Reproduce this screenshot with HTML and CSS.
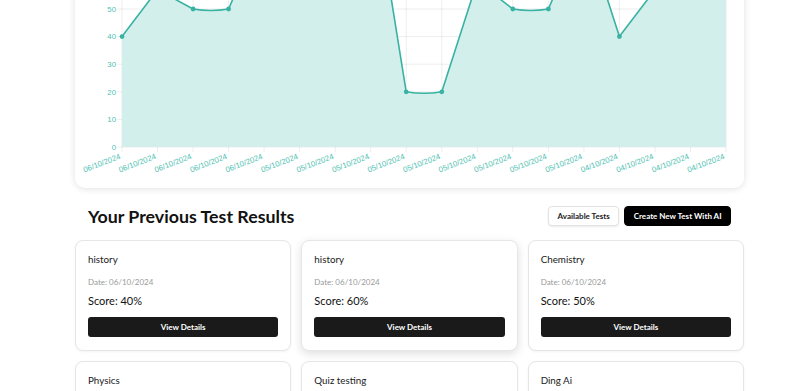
FILE: index.html
```html
<!DOCTYPE html>
<html lang="en">
<head>
<meta charset="utf-8">
<title>Test Results</title>
<link rel="stylesheet" href="styles.css">
</head>
<body>
<main class="page">
  <section class="chart-card">
    <svg class="chart" width="669" height="375" viewBox="75 -200 669 375" xmlns="http://www.w3.org/2000/svg">
      <g class="grid">
        <line x1="117" y1="147" x2="726" y2="147"/>
        <line x1="117" y1="119.4" x2="726" y2="119.4"/>
        <line x1="117" y1="91.8" x2="726" y2="91.8"/>
        <line x1="117" y1="64.2" x2="726" y2="64.2"/>
        <line x1="117" y1="36.6" x2="726" y2="36.6"/>
        <line x1="117" y1="9" x2="726" y2="9"/>
        <line x1="117" y1="-18.6" x2="726" y2="-18.6"/>
        <line x1="117" y1="-46.2" x2="726" y2="-46.2"/>
        <line x1="117" y1="-73.8" x2="726" y2="-73.8"/>
        <line x1="117" y1="-101.4" x2="726" y2="-101.4"/>
        <line x1="117" y1="-129" x2="726" y2="-129"/>
        <line x1="122" y1="-129" x2="122" y2="152"/>
        <line x1="157.5" y1="-129" x2="157.5" y2="152"/>
        <line x1="193.1" y1="-129" x2="193.1" y2="152"/>
        <line x1="228.6" y1="-129" x2="228.6" y2="152"/>
        <line x1="264.1" y1="-129" x2="264.1" y2="152"/>
        <line x1="299.6" y1="-129" x2="299.6" y2="152"/>
        <line x1="335.2" y1="-129" x2="335.2" y2="152"/>
        <line x1="370.7" y1="-129" x2="370.7" y2="152"/>
        <line x1="406.2" y1="-129" x2="406.2" y2="152"/>
        <line x1="441.8" y1="-129" x2="441.8" y2="152"/>
        <line x1="477.3" y1="-129" x2="477.3" y2="152"/>
        <line x1="512.8" y1="-129" x2="512.8" y2="152"/>
        <line x1="548.4" y1="-129" x2="548.4" y2="152"/>
        <line x1="583.9" y1="-129" x2="583.9" y2="152"/>
        <line x1="619.4" y1="-129" x2="619.4" y2="152"/>
        <line x1="655" y1="-129" x2="655" y2="152"/>
        <line x1="690.5" y1="-129" x2="690.5" y2="152"/>
        <line x1="726" y1="-129" x2="726" y2="152"/>
      </g>
      <path class="area" d="M122,36.6 L157.5,-10.3 L193.1,9 C205,11 216.7,11 228.6,9 L264.1,-73.8 L299.6,-73.8 L335.2,-101.4 L370.7,-129 L406.2,91.8 C418,93.8 430,93.8 441.8,91.8 L477.3,-18.6 L512.8,9 C524.7,11 536.5,11 548.4,9 L583.9,-73.8 L619.4,36.6 L655,-10.3 L690.5,-18.6 L726,-46.2 L726,147 L122,147 Z"/>
      <path class="line" d="M122,36.6 L157.5,-10.3 L193.1,9 C205,11 216.7,11 228.6,9 L264.1,-73.8 L299.6,-73.8 L335.2,-101.4 L370.7,-129 L406.2,91.8 C418,93.8 430,93.8 441.8,91.8 L477.3,-18.6 L512.8,9 C524.7,11 536.5,11 548.4,9 L583.9,-73.8 L619.4,36.6 L655,-10.3 L690.5,-18.6 L726,-46.2"/>
      <g class="dots">
        <circle cx="122" cy="36.6" r="2.4"/>
        <circle cx="157.5" cy="-10.3" r="2.4"/>
        <circle cx="193.1" cy="9" r="2.4"/>
        <circle cx="228.6" cy="9" r="2.4"/>
        <circle cx="264.1" cy="-73.8" r="2.4"/>
        <circle cx="299.6" cy="-73.8" r="2.4"/>
        <circle cx="335.2" cy="-101.4" r="2.4"/>
        <circle cx="370.7" cy="-129" r="2.4"/>
        <circle cx="406.2" cy="91.8" r="2.4"/>
        <circle cx="441.8" cy="91.8" r="2.4"/>
        <circle cx="477.3" cy="-18.6" r="2.4"/>
        <circle cx="512.8" cy="9" r="2.4"/>
        <circle cx="548.4" cy="9" r="2.4"/>
        <circle cx="583.9" cy="-73.8" r="2.4"/>
        <circle cx="619.4" cy="36.6" r="2.4"/>
        <circle cx="655" cy="-10.3" r="2.4"/>
        <circle cx="690.5" cy="-18.6" r="2.4"/>
        <circle cx="726" cy="-46.2" r="2.4"/>
      </g>
      <g class="ylabels">
        <text x="116" y="149.7">0</text>
        <text x="116" y="122.1">10</text>
        <text x="116" y="94.5">20</text>
        <text x="116" y="66.9">30</text>
        <text x="116" y="39.3">40</text>
        <text x="116" y="11.7">50</text>
      </g>
      <g class="xlabels">
        <text transform="translate(121,158.5) rotate(-21)">06/10/2024</text>
        <text transform="translate(156.5,158.5) rotate(-21)">06/10/2024</text>
        <text transform="translate(192.1,158.5) rotate(-21)">06/10/2024</text>
        <text transform="translate(227.6,158.5) rotate(-21)">06/10/2024</text>
        <text transform="translate(263.1,158.5) rotate(-21)">06/10/2024</text>
        <text transform="translate(298.6,158.5) rotate(-21)">05/10/2024</text>
        <text transform="translate(334.2,158.5) rotate(-21)">05/10/2024</text>
        <text transform="translate(369.7,158.5) rotate(-21)">05/10/2024</text>
        <text transform="translate(405.2,158.5) rotate(-21)">05/10/2024</text>
        <text transform="translate(440.8,158.5) rotate(-21)">05/10/2024</text>
        <text transform="translate(476.3,158.5) rotate(-21)">05/10/2024</text>
        <text transform="translate(511.8,158.5) rotate(-21)">05/10/2024</text>
        <text transform="translate(547.4,158.5) rotate(-21)">05/10/2024</text>
        <text transform="translate(582.9,158.5) rotate(-21)">05/10/2024</text>
        <text transform="translate(618.4,158.5) rotate(-21)">04/10/2024</text>
        <text transform="translate(654,158.5) rotate(-21)">04/10/2024</text>
        <text transform="translate(689.5,158.5) rotate(-21)">04/10/2024</text>
        <text transform="translate(725,158.5) rotate(-21)">04/10/2024</text>
      </g>
    </svg>
  </section>

  <header class="results-head">
    <h2 class="results-title">Your Previous Test Results</h2>
    <div class="actions">
      <button class="btn btn-outline" type="button">Available Tests</button>
      <button class="btn btn-dark" type="button">Create New Test With AI</button>
    </div>
  </header>

  <section class="results-grid">
    <article class="result-card">
      <h3 class="result-name">history</h3>
      <p class="result-date">Date: 06/10/2024</p>
      <p class="result-score">Score: 40%</p>
      <button class="btn-details" type="button">View Details</button>
    </article>
    <article class="result-card result-card-raised">
      <h3 class="result-name">history</h3>
      <p class="result-date">Date: 06/10/2024</p>
      <p class="result-score">Score: 60%</p>
      <button class="btn-details" type="button">View Details</button>
    </article>
    <article class="result-card">
      <h3 class="result-name">Chemistry</h3>
      <p class="result-date">Date: 06/10/2024</p>
      <p class="result-score">Score: 50%</p>
      <button class="btn-details" type="button">View Details</button>
    </article>
    <article class="result-card">
      <h3 class="result-name">Physics</h3>
      <p class="result-date">Date: 06/10/2024</p>
      <p class="result-score">Score: 50%</p>
      <button class="btn-details" type="button">View Details</button>
    </article>
    <article class="result-card">
      <h3 class="result-name">Quiz testing</h3>
      <p class="result-date">Date: 05/10/2024</p>
      <p class="result-score">Score: 100%</p>
      <button class="btn-details" type="button">View Details</button>
    </article>
    <article class="result-card">
      <h3 class="result-name">Ding Ai</h3>
      <p class="result-date">Date: 05/10/2024</p>
      <p class="result-score">Score: 20%</p>
      <button class="btn-details" type="button">View Details</button>
    </article>
  </section>
</main>
</body>
</html>
```
FILE: styles.css
```css
html, body {
  margin: 0;
  padding: 0;
  background: #ffffff;
}

body {
  font-family: Lato, "Noto Sans", "Liberation Sans", sans-serif;
  color: #111;
}

.page {
  width: 669px;
  margin: -200px 0 0 75px;
}

.chart-card {
  background: #fff;
  border-radius: 10px;
  box-shadow: 0 1px 7px rgba(0, 0, 0, 0.12);
  padding: 0 0 13px;
}

.chart {
  display: block;
  overflow: hidden;
}

.grid line {
  stroke: rgba(0, 0, 0, 0.07);
  stroke-width: 1;
}

.area {
  fill: #d3efeb;
}

.line {
  fill: none;
  stroke: #38b2a2;
  stroke-width: 1.6;
  stroke-linejoin: round;
}

.dots circle {
  fill: #38b2a2;
}

.ylabels text,
.xlabels text {
  font-family: "Liberation Sans", Arial, sans-serif;
  font-size: 7.8px;
  fill: #4fbfb2;
}

.ylabels text {
  text-anchor: end;
}

.xlabels text {
  text-anchor: end;
}

.results-head {
  margin-top: 18px;
  padding: 0 13px;
  height: 20px;
  display: flex;
  align-items: center;
  justify-content: space-between;
}

.results-title {
  margin: 0;
  font-size: 17.8px;
  line-height: 20px;
  font-weight: 700;
  color: #111;
}

.actions {
  display: flex;
  gap: 5px;
}

.btn {
  height: 20px;
  border-radius: 4px;
  font-family: inherit;
  font-size: 8px;
  font-weight: 700;
  padding: 0 8.5px;
  cursor: pointer;
}

.btn-outline {
  background: #fff;
  color: #222;
  border: 1px solid #e2e2e2;
  box-shadow: 0 1px 2px rgba(0, 0, 0, 0.08);
}

.btn-dark {
  background: #000;
  color: #fff;
  border: 1px solid #000;
}

.results-grid {
  margin-top: 14px;
  display: grid;
  grid-template-columns: repeat(3, 1fr);
  gap: 10px;
}

.result-card {
  background: #fff;
  border: 1px solid #e6e6e6;
  border-radius: 8px;
  padding: 11px 12px 13px;
  box-shadow: 0 1px 3px rgba(0, 0, 0, 0.05);
  display: flex;
  flex-direction: column;
}

.result-card-raised {
  box-shadow: 0 3px 10px rgba(0, 0, 0, 0.13);
}

.result-name {
  margin: 0;
  font-size: 9.8px;
  line-height: 14px;
  font-weight: 400;
  color: #1a1a1a;
}

.result-date {
  margin: 10px 0 0;
  font-size: 8px;
  line-height: 13px;
  color: #9a9a9a;
}

.result-score {
  margin: 3px 0 0;
  font-size: 11px;
  line-height: 17px;
  color: #111;
}

.btn-details {
  margin-top: 8px;
  height: 20px;
  border: 0;
  border-radius: 3px;
  background: #1a1a1a;
  color: #fff;
  font-family: inherit;
  font-size: 8px;
  font-weight: 700;
  cursor: pointer;
}
```
